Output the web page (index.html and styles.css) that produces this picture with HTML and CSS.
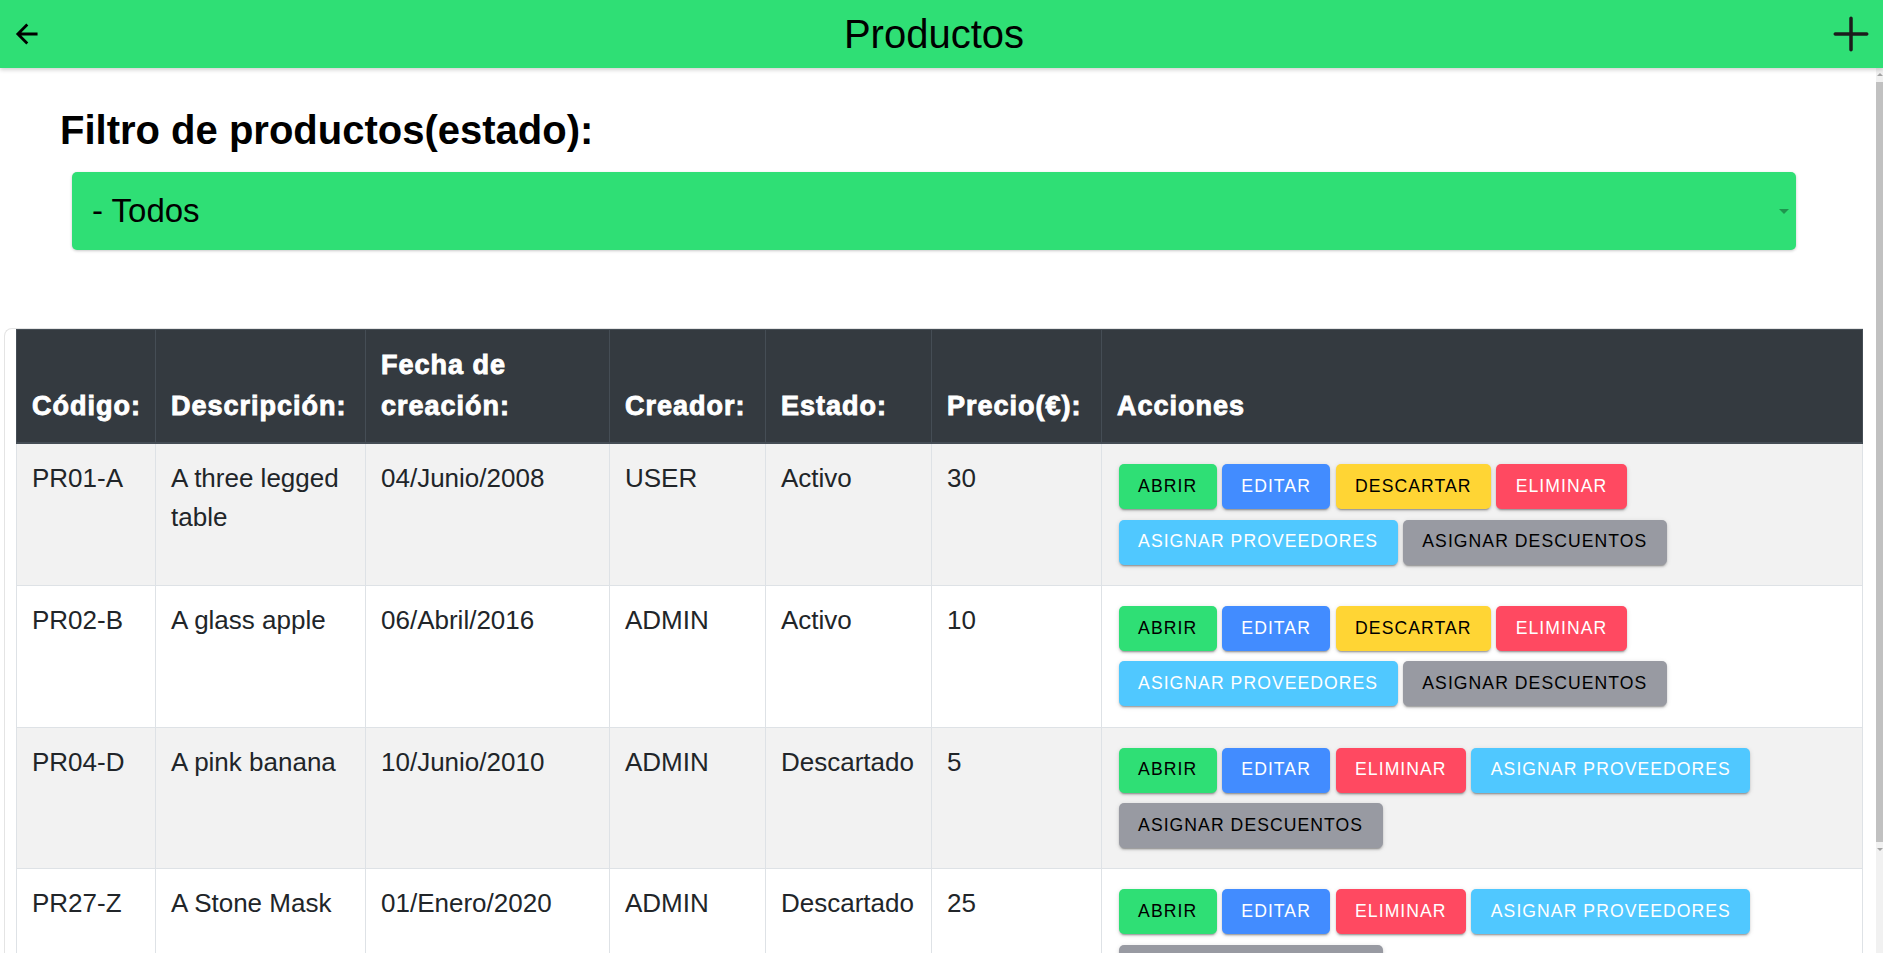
FILE: index.html
```html
<!DOCTYPE html>
<html lang="es">
<head>
<meta charset="utf-8">
<title>Productos</title>
<link rel="stylesheet" href="styles.css">
</head>
<body>
<div class="app">
  <header class="toolbar">
    <div class="tb-start">
      <svg class="icon-back" viewBox="0 0 512 512"><path d="M244 400L100 256l144-144M120 256h292" fill="none" stroke="currentColor" stroke-linecap="square" stroke-miterlimit="10" stroke-width="48"/></svg>
    </div>
    <div class="tb-title">Productos</div>
    <div class="tb-end">
      <svg class="icon-add" viewBox="0 0 512 512"><path d="M256 112v288M400 256H112" fill="none" stroke="currentColor" stroke-linecap="round" stroke-linejoin="round" stroke-width="32"/></svg>
    </div>
  </header>
  <div class="body-wrap">
    <main class="content">
      <h2 class="filter-title">Filtro de productos(estado):</h2>
      <div class="select">
        <span class="select-text">- Todos</span>
        <span class="select-caret"></span>
      </div>
      <div class="card">
        <table class="products">
          <colgroup>
            <col class="c-code"><col class="c-desc"><col class="c-date"><col class="c-user"><col class="c-state"><col class="c-price"><col>
          </colgroup>
          <thead>
            <tr>
              <th>Código:</th>
              <th>Descripción:</th>
              <th>Fecha de creación:</th>
              <th>Creador:</th>
              <th>Estado:</th>
              <th>Precio(€):</th>
              <th>Acciones</th>
            </tr>
          </thead>
          <tbody>
            <tr>
              <td>PR01-A</td>
              <td>A three legged table</td>
              <td>04/Junio/2008</td>
              <td>USER</td>
              <td>Activo</td>
              <td>30</td>
              <td class="actions-cell"><div class="actions">
                <span class="btn btn-success">Abrir</span><span class="btn btn-primary">Editar</span><span class="btn btn-warning">Descartar</span><span class="btn btn-danger">Eliminar</span><span class="btn btn-secondary">Asignar proveedores</span><span class="btn btn-medium">Asignar descuentos</span>
              </div></td>
            </tr>
            <tr>
              <td>PR02-B</td>
              <td>A glass apple</td>
              <td>06/Abril/2016</td>
              <td>ADMIN</td>
              <td>Activo</td>
              <td>10</td>
              <td class="actions-cell"><div class="actions">
                <span class="btn btn-success">Abrir</span><span class="btn btn-primary">Editar</span><span class="btn btn-warning">Descartar</span><span class="btn btn-danger">Eliminar</span><span class="btn btn-secondary">Asignar proveedores</span><span class="btn btn-medium">Asignar descuentos</span>
              </div></td>
            </tr>
            <tr>
              <td>PR04-D</td>
              <td>A pink banana</td>
              <td>10/Junio/2010</td>
              <td>ADMIN</td>
              <td>Descartado</td>
              <td>5</td>
              <td class="actions-cell"><div class="actions">
                <span class="btn btn-success">Abrir</span><span class="btn btn-primary">Editar</span><span class="btn btn-danger">Eliminar</span><span class="btn btn-secondary">Asignar proveedores</span><span class="btn btn-medium">Asignar descuentos</span>
              </div></td>
            </tr>
            <tr>
              <td>PR27-Z</td>
              <td>A Stone Mask</td>
              <td>01/Enero/2020</td>
              <td>ADMIN</td>
              <td>Descartado</td>
              <td>25</td>
              <td class="actions-cell"><div class="actions">
                <span class="btn btn-success">Abrir</span><span class="btn btn-primary">Editar</span><span class="btn btn-danger">Eliminar</span><span class="btn btn-secondary">Asignar proveedores</span><span class="btn btn-medium">Asignar descuentos</span>
              </div></td>
            </tr>
          </tbody>
        </table>
      </div>
    </main>
    <div class="scrollbar" aria-hidden="true">
      <span class="sb-arrow sb-up"></span>
      <span class="sb-thumb"></span>
      <span class="sb-arrow sb-down"></span>
    </div>
  </div>
</div>
</body>
</html>
```
FILE: styles.css
```css
html, body {
  margin: 0;
  height: 100%;
}
body {
  font-family: "Liberation Sans", Arial, sans-serif;
  overflow: hidden;
  background: #fff;
}
.app {
  display: flex;
  flex-direction: column;
  height: 100vh;
}

/* toolbar */
.toolbar {
  flex: 0 0 68px;
  height: 68px;
  background: #2fdf75;
  display: flex;
  align-items: center;
  box-shadow: 0 2px 4px rgba(0, 0, 0, 0.18);
  position: relative;
  z-index: 2;
}
.tb-start {
  width: 56px;
  box-sizing: border-box;
  padding-left: 12px;
  display: flex;
  align-items: center;
}
.icon-back {
  width: 30px;
  height: 30px;
  color: #000;
  display: block;
}
.tb-title {
  flex: 1;
  text-align: center;
  font-size: 40px;
  color: #000;
}
.tb-end {
  width: 71px;
  box-sizing: border-box;
  padding-right: 4px;
  display: flex;
  justify-content: flex-end;
  align-items: center;
}
.icon-add {
  width: 56px;
  height: 56px;
  color: #1c1c1c;
  display: block;
}

/* scrolling content */
.body-wrap {
  flex: 1;
  min-height: 0;
  position: relative;
}
.content {
  height: 100%;
  overflow-y: scroll;
  scrollbar-width: none;
}
.content::-webkit-scrollbar {
  display: none;
}
.scrollbar {
  position: absolute;
  top: 0;
  right: 0;
  bottom: 0;
  width: 7px;
  background: #f1f1f1;
  display: flex;
  flex-direction: column;
}
.sb-arrow {
  height: 14px;
  flex: 0 0 14px;
  position: relative;
}
.sb-up::after,
.sb-down::after {
  content: "";
  position: absolute;
  left: 1px;
  width: 0;
  height: 0;
  border-left: 3px solid transparent;
  border-right: 3px solid transparent;
}
.sb-up::after {
  top: 5px;
  border-bottom: 3px solid #a3a3a3;
}
.sb-down::after {
  bottom: 5px;
  border-top: 3px solid #a3a3a3;
}
.sb-thumb {
  flex: 0 0 760px;
  background: #c1c1c1;
}

.filter-title {
  margin: 39px 0 0 60px;
  font-size: 40px;
  line-height: 46px;
  font-weight: 700;
  color: #000;
}

.select {
  margin: 19px 87px 0 72px;
  height: 78px;
  box-sizing: border-box;
  background: #2fdf75;
  border-radius: 5px;
  box-shadow: 0 1px 3px rgba(0, 0, 0, 0.22);
  display: flex;
  align-items: center;
  padding: 0 7px 0 20px;
}
.select-text {
  flex: 1;
  font-size: 33px;
  color: #000;
}
.select-caret {
  width: 0;
  height: 0;
  border-left: 5px solid transparent;
  border-right: 5px solid transparent;
  border-top: 5px solid rgba(0, 0, 0, 0.33);
}

/* table card */
.card {
  margin: 78px 20px 60px 4px;
  border-left: 1px solid #e4e4e4;
  border-top: 1px solid #e4e4e4;
  border-top-left-radius: 8px;
  padding-left: 11px;
}
.products {
  width: 100%;
  border-collapse: collapse;
  table-layout: fixed;
  color: #212529;
}
.c-code { width: 139px; }
.c-desc { width: 210px; }
.c-date { width: 244px; }
.c-user { width: 156px; }
.c-state { width: 166px; }
.c-price { width: 170px; }

.products th {
  background: #343a40;
  color: #fff;
  border: 1px solid #454d55;
  border-bottom-width: 2px;
  padding: 15px 15px 16px;
  vertical-align: bottom;
  text-align: left;
  font-size: 27px;
  line-height: 40.5px;
  font-weight: 700;
  letter-spacing: 1px;
  -webkit-text-stroke: 0.9px #fff;
}
.products td {
  border: 1px solid #dee2e6;
  padding: 15px;
  vertical-align: top;
  font-size: 26px;
  line-height: 39px;
}
.products tbody tr:nth-child(odd) td {
  background: #f2f2f2;
}

.actions {
  display: flex;
  flex-wrap: wrap;
  margin: 0 -4px 0 -1px;
}
.btn {
  display: inline-flex;
  align-items: center;
  height: 45px;
  margin: 5.2px 2.6px;
  padding: 0 19.5px;
  border-radius: 5px;
  font-size: 17.6px;
  letter-spacing: 0.06em;
  text-transform: uppercase;
  line-height: 1;
  white-space: nowrap;
  box-shadow: 0 3px 1px -2px rgba(0, 0, 0, 0.2), 0 2px 2px 0 rgba(0, 0, 0, 0.14), 0 1px 5px 0 rgba(0, 0, 0, 0.12);
}
.btn-success { background: #2fdf75; color: #000; }
.btn-primary { background: #428cff; color: #fff; }
.btn-warning { background: #ffd534; color: #000; }
.btn-danger { background: #ff4961; color: #fff; }
.btn-secondary { background: #50c8ff; color: #fff; }
.btn-medium { background: #989aa2; color: #000; }
```
